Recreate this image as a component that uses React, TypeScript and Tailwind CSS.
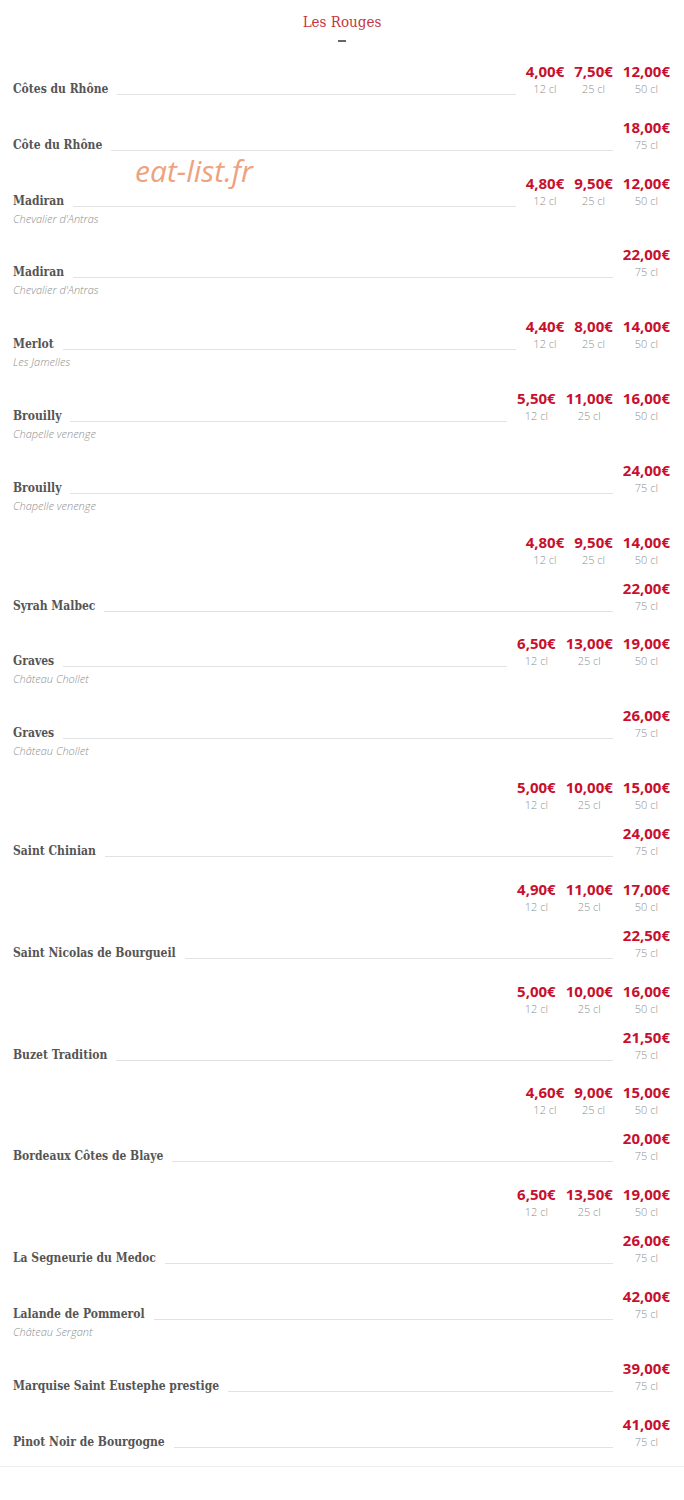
type Price = { p: string; u: string };

type Row = { name?: string; sub?: string; prices: Price[] };

const three = (a: string, b: string, c: string): Price[] => [
  { p: a, u: "12 cl" },
  { p: b, u: "25 cl" },
  { p: c, u: "50 cl" },
];
const bottle = (a: string): Price[] => [{ p: a, u: "75 cl" }];

const rows: Row[] = [
  { name: "Côtes du Rhône", prices: three("4,00€", "7,50€", "12,00€") },
  { name: "Côte du Rhône", prices: bottle("18,00€") },
  { name: "Madiran", sub: "Chevalier d'Antras", prices: three("4,80€", "9,50€", "12,00€") },
  { name: "Madiran", sub: "Chevalier d'Antras", prices: bottle("22,00€") },
  { name: "Merlot", sub: "Les Jamelles", prices: three("4,40€", "8,00€", "14,00€") },
  { name: "Brouilly", sub: "Chapelle venenge", prices: three("5,50€", "11,00€", "16,00€") },
  { name: "Brouilly", sub: "Chapelle venenge", prices: bottle("24,00€") },
  { prices: three("4,80€", "9,50€", "14,00€") },
  { name: "Syrah Malbec", prices: bottle("22,00€") },
  { name: "Graves", sub: "Château Chollet", prices: three("6,50€", "13,00€", "19,00€") },
  { name: "Graves", sub: "Château Chollet", prices: bottle("26,00€") },
  { prices: three("5,00€", "10,00€", "15,00€") },
  { name: "Saint Chinian", prices: bottle("24,00€") },
  { prices: three("4,90€", "11,00€", "17,00€") },
  { name: "Saint Nicolas de Bourgueil", prices: bottle("22,50€") },
  { prices: three("5,00€", "10,00€", "16,00€") },
  { name: "Buzet Tradition", prices: bottle("21,50€") },
  { prices: three("4,60€", "9,00€", "15,00€") },
  { name: "Bordeaux Côtes de Blaye", prices: bottle("20,00€") },
  { prices: three("6,50€", "13,50€", "19,00€") },
  { name: "La Segneurie du Medoc", prices: bottle("26,00€") },
  { name: "Lalande de Pommerol", sub: "Château Sergant", prices: bottle("42,00€") },
  { name: "Marquise Saint Eustephe prestige", prices: bottle("39,00€") },
  { name: "Pinot Noir de Bourgogne", prices: bottle("41,00€") },
];

const slab = { fontFamily: '"DejaVu Serif Condensed", "DejaVu Serif", serif' };
const sans = { fontFamily: '"Open Sans", "Noto Sans", sans-serif' };

function WineRow({ row }: { row: Row }) {
  return (
    <div className="flex items-start pb-[10px]">
      <div className="flex-1 min-w-0 pr-[10px]">
        {row.name && (
          <div className="pt-[18px] pb-[7.8px]">
            <div className="flex items-start h-[20px]">
              <span
                className="text-[12px] leading-[20px] font-semibold text-[#555555] whitespace-nowrap"
                style={slab}
              >
                {row.name}
              </span>
              <div className="flex-1 ml-[9px] mt-[15px] border-b border-[#e2e2e2]" />
            </div>
            {row.sub && (
              <div
                className="text-[11px] leading-[16px] italic font-light text-[#8e8e8e]"
                style={sans}
              >
                {row.sub}
              </div>
            )}
          </div>
        )}
      </div>
      <div className="flex gap-[10px]" style={sans}>
        {row.prices.map((pr, i) => (
          <div key={i} className="flex flex-col items-center">
            <span className="text-[15px] leading-[20px] font-bold text-[#c8102e]">{pr.p}</span>
            <span className="text-[11px] leading-[16px] font-light text-[#8e8e8e]">{pr.u}</span>
          </div>
        ))}
      </div>
    </div>
  );
}

export default function App() {
  return (
    <div className="relative w-[684px] bg-white min-h-[1500px]">
      {/* titre */}
      <div className="flex flex-col items-center pt-[12px] h-[61px]">
        <h2 className="text-[15px] leading-[20px] text-[#c43543]" style={slab}>
          Les Rouges
        </h2>
        <div className="mt-[8px] w-[8px] h-[2px] bg-[#666666]" />
      </div>

      {/* carte */}
      <div className="pl-[13px] pr-[14px]">
        {rows.map((r, i) => (
          <WineRow key={i} row={r} />
        ))}
      </div>
      <div className="border-b border-[#ececec] -mt-[3px]" />

      {/* filigrane */}
      <div
        className="absolute left-[135px] top-[148px] text-[30px] italic text-[#eea27e] pointer-events-none"
        style={sans}
      >
        eat-list.fr
      </div>
    </div>
  );
}
